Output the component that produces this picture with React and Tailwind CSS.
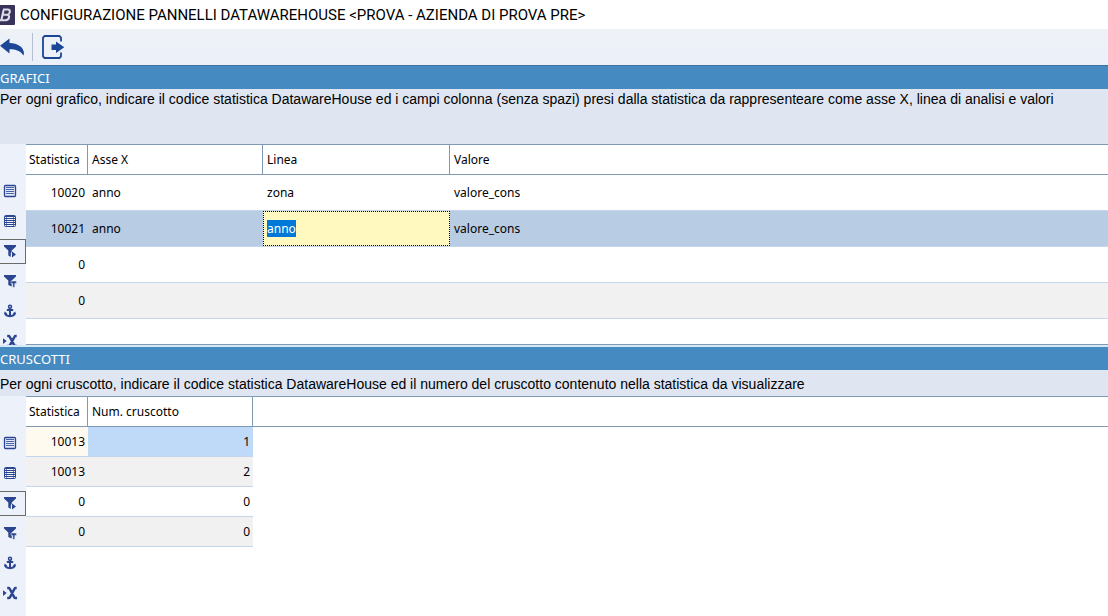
import React from "react";

const chartRows = [
  { code: 10020, axis: "anno", line: "zona", value: "valore_cons", tone: "bg-white" },
  { code: 10021, axis: "anno", line: "anno", value: "valore_cons", tone: "bg-[#b8cce4]", editing: true },
  { code: 0, axis: "", line: "", value: "", tone: "bg-white" },
  { code: 0, axis: "", line: "", value: "", tone: "bg-[#f1f1f1]" },
];

const dashboardRows = [
  { code: 10013, number: 1, tone: "bg-white", current: true },
  { code: 10013, number: 2, tone: "bg-[#f1f1f1]" },
  { code: 0, number: 0, tone: "bg-white" },
  { code: 0, number: 0, tone: "bg-[#f1f1f1]" },
];

function Glyph({ children }) {
  return (
    <svg viewBox="0 0 16 16" className="h-4 w-4 shrink-0" fill="#2b4590" aria-hidden="true">
      {children}
    </svg>
  );
}

const FormIcon = () => (
  <Glyph>
    <rect x="2.5" y="2.5" width="11" height="11" rx="1" fill="#e4eaf7" stroke="#2b4590" strokeWidth="1.3" />
    <path d="M4 4h8v1H4zM4 6h8v1H4zM4 8h8v1H4zM4 10h8v1H4z" fill="#4661a6" />
  </Glyph>
);

const GridIcon = () => (
  <Glyph>
    <rect x="2.5" y="2.5" width="11" height="11" rx="1" fill="#eef2fb" stroke="#2b4590" />
    <path d="M3 3h10v1H3zM3 5h10v1H3zM3 7h10v1H3zM3 9h10v1H3zM3 11h10v1H3z" />
    <path d="M4 3h1v10H4zM11 3h1v10h-1z" opacity=".6" />
  </Glyph>
);

const FunnelRunIcon = () => (
  <Glyph>
    <path d="M2 2h12v1.600L9.700 7.600V9l-.9 1v4L6.300 12.400V7.600L2 3.600z" />
    <path d="M10 8.400l4 3-4 3z" />
  </Glyph>
);

const FunnelTextIcon = () => (
  <Glyph>
    <path d="M2 2h12v1.600L9.700 7.400V13.600L6.300 12V7.600L2 3.600z" />
    <path d="M9 8h5.400v2.400h-1.600v3.900h-2v-3.900H9z" stroke="#edf1fa" strokeWidth=".5" />
  </Glyph>
);

const AnchorIcon = () => (
  <Glyph>
    <g fill="none" stroke="#2b4590" strokeWidth="2">
      <circle cx="8" cy="3.700" r="1.500" strokeWidth="1.500" />
      <path d="M8 5v8.500M4.800 7h6.400M3.300 10.200c.3 2 2.200 3 4.700 3s4.400-1 4.700-3" />
    </g>
    <path d="M2 11.500l.7-3 2.600 1.900zM14 11.500l-.7-3-2.600 1.900z" />
  </Glyph>
);

const ExcelIcon = () => (
  <Glyph>
    <path d="M1 5.300l3.700 2.800L1 11z" />
    <path
      d="M5.200 3h1.300q.8 0 1.200.8l4.600 8.600q.4.700 1.200.700h1.500M14.700 3h-1q-.8 0-1.200.8l-4.600 8.600q-.4.700-1.200.7H5.200"
      fill="none"
      stroke="#2b4590"
      strokeWidth="2.500"
    />
  </Glyph>
);

const tools = [
  { label: "Scheda", Icon: FormIcon },
  { label: "Griglia", Icon: GridIcon },
  { label: "Applica filtro", Icon: FunnelRunIcon, active: true },
  { label: "Filtro testo", Icon: FunnelTextIcon },
  { label: "Ancora", Icon: AnchorIcon },
  { label: "Esporta in Excel", Icon: ExcelIcon },
];

function ToolRail() {
  return (
    <nav className="flex w-[26px] shrink-0 flex-col gap-[5px] bg-[#edf1fa] pt-[35px]">
      {tools.map(({ label, Icon, active }) => (
        <button
          key={label}
          type="button"
          aria-label={label}
          className={
            "flex h-[25px] w-full shrink-0 items-center border border-l-0 pb-px pl-0.5 " +
            (active ? "border-[#6b6b6b]" : "border-transparent")
          }
        >
          <Icon />
        </button>
      ))}
    </nav>
  );
}

function Banner({ title, className = "" }) {
  return (
    <h2
      className={
        "flex items-center bg-[#458bc2] font-['Noto_Sans',sans-serif] text-[13px] leading-4 text-white " + className
      }
    >
      {title}
    </h2>
  );
}

const head = "h-[30px] border-b border-[#8099b3] p-0 text-left font-normal";
const headFirst = head + " border-r pl-[3px]";
const headSplit = head + " border-r pl-1";
const line = "border-b border-[#c3d6eb] p-0";

export default function App() {
  return (
    <div className="flex min-h-screen flex-col overflow-hidden bg-white font-['Noto_Sans',sans-serif] text-xs leading-4 text-black">
      <header className="flex h-[29px] items-center gap-1 bg-white">
        <svg viewBox="0 0 16 20" className="h-5 w-4 shrink-0" aria-hidden="true">
          <rect x="-4" width="19" height="20" rx="1" fill="#37335a" />
          <path
            d="M3 4.500h4.700q2.600.2 2.100 2.600-.4 2-2.300 2.600 1.900.7 1.500 2.800-.5 2.600-3.300 2.700H0M3.500 9.700h4M3.600 5L1.400 15"
            fill="none"
            stroke="#dcdae6"
            strokeWidth="2.100"
          />
        </svg>
        <h1 className="font-[Roboto,sans-serif] text-[15px] whitespace-nowrap">
          CONFIGURAZIONE PANNELLI DATAWAREHOUSE &lt;PROVA - AZIENDA DI PROVA PRE&gt;
        </h1>
      </header>

      <div className="flex h-9 items-center bg-linear-to-b from-[#eef2f7] to-[#ebf0fa]">
        <button type="button" aria-label="Annulla" className="h-7 w-8">
          <svg viewBox="0 0 32 28" className="h-7 w-8" aria-hidden="true">
            <path d="M0 12.800L9.500 5.500V10c8 .2 14.500 4 14.500 10.500l-.5 2C20.500 18 16 16.300 9.500 16.300v4.200z" fill="#1b4796" />
          </svg>
        </button>
        <span className="h-7 w-px bg-[#b5bfd0]" />
        <button type="button" aria-label="Esci" className="ml-2 h-7 w-6">
          <svg viewBox="0 0 24 28" className="h-7 w-6" aria-hidden="true">
            <path
              d="M20 8.500V4.500L18.500 3H3.500L2 4.500v19L3.500 25h15l1.500-1.500v-4"
              fill="none"
              stroke="#1b4796"
              strokeWidth="1.800"
            />
            <path d="M10.500 11.500H15V8.500l8.300 5.700-8.300 5.700V17h-4.500z" fill="#1b4796" />
          </svg>
        </button>
      </div>

      <section>
        <Banner title="GRAFICI" className="h-6 border-t border-[#41719f]" />
        <p className="h-[55px] bg-[#dfe6f2] font-['Liberation_Sans',Arial,sans-serif] text-sm leading-5">
          Per ogni grafico, indicare il codice statistica DatawareHouse ed i campi colonna (senza spazi) presi dalla
          statistica da rappresenteare come asse X, linea di analisi e valori
        </p>
        <div className="flex h-[201px] overflow-hidden">
          <ToolRail />
          <div className="min-w-0 flex-1 border-y border-[#8099b3]">
            <table className="w-full table-fixed border-separate border-spacing-0">
              <colgroup>
                <col className="w-[62px]" />
                <col className="w-[175px]" />
                <col className="w-[187px]" />
                <col />
              </colgroup>
              <thead>
                <tr>
                  <th className={headFirst}>Statistica</th>
                  <th className={headSplit}>Asse X</th>
                  <th className={headSplit}>Linea</th>
                  <th className={head + " pl-1"}>Valore</th>
                </tr>
              </thead>
              <tbody>
                {chartRows.map((row, i) => (
                  <tr key={i} className={row.tone}>
                    <td className={line + " h-9 pr-[3px] text-right"}>{row.code}</td>
                    <td className={line + " pl-1"}>{row.axis}</td>
                    {row.editing ? (
                      <td className={line}>
                        <input
                          type="text"
                          aria-label="Linea"
                          autoFocus
                          onFocus={(e) => e.target.select()}
                          defaultValue={row.line}
                          className="block h-[35px] w-full rounded-none border border-dotted border-black bg-[#fff9c0] px-[3px] outline-none selection:bg-[#0078d7] selection:text-white"
                        />
                      </td>
                    ) : (
                      <td className={line + " pl-1"}>{row.line}</td>
                    )}
                    <td className={line + " pl-1"}>{row.value}</td>
                  </tr>
                ))}
              </tbody>
            </table>
          </div>
        </div>
      </section>

      <section className="flex flex-1 flex-col border-t-2 border-[#d3e9f8]">
        <Banner title="CRUSCOTTI" className="h-[23px]" />
        <p className="bg-[#dfe6f2] pt-1 pb-0.5 font-['Liberation_Sans',Arial,sans-serif] text-sm leading-5">
          Per ogni cruscotto, indicare il codice statistica DatawareHouse ed il numero del cruscotto contenuto nella
          statistica da visualizzare
        </p>
        <div className="flex flex-1">
          <ToolRail />
          <div className="min-w-0 flex-1 border-t border-[#8099b3]">
            <table className="w-full table-fixed border-separate border-spacing-0">
              <colgroup>
                <col className="w-[62px]" />
                <col className="w-[165px]" />
                <col />
              </colgroup>
              <thead>
                <tr>
                  <th className={headFirst}>Statistica</th>
                  <th className={headSplit}>Num. cruscotto</th>
                  <td className={head} />
                </tr>
              </thead>
              <tbody>
                {dashboardRows.map((row, i) => (
                  <tr key={i}>
                    <td className={line + " h-[30px] pr-[3px] text-right " + (row.current ? "bg-[#fffaf0]" : row.tone)}>
                      {row.code}
                    </td>
                    <td className={line + " pr-[3px] text-right " + (row.current ? "bg-[#bedaf8]" : row.tone)}>
                      {row.number}
                    </td>
                    <td />
                  </tr>
                ))}
              </tbody>
            </table>
          </div>
        </div>
      </section>
    </div>
  );
}
